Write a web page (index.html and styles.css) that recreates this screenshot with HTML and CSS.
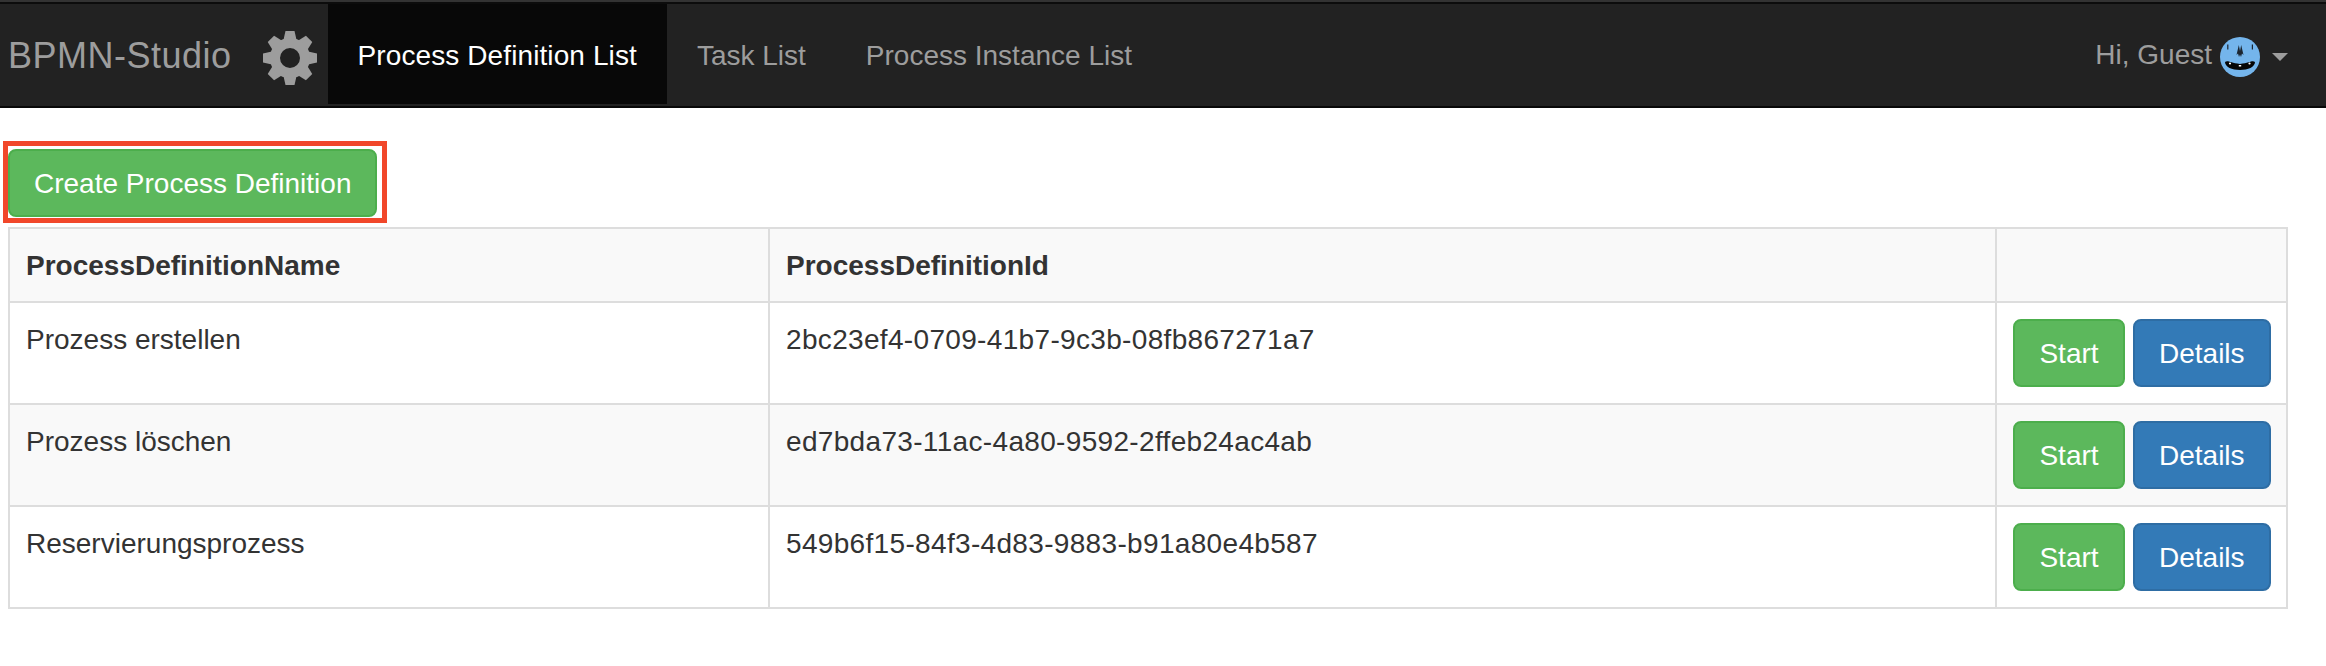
FILE: index.html
```html
<!DOCTYPE html>
<html lang="en">
<head>
    <meta charset="UTF-8">
    <meta name="viewport" content="width=device-width, initial-scale=1.0">
    <title>BPMN-Studio</title>
    <link rel="stylesheet" href="styles.css">
</head>
<body>
    <nav class="navbar">
        <a class="brand" href="#">BPMN-Studio</a>
        <svg class="gear" viewBox="-28 -28 56 56" aria-hidden="true">
            <g fill="#9d9d9d">
                <path d="M-4.500 -27 H4.500 L7 -16 H-7 Z"/>
                <path d="M-4.500 -27 H4.500 L7 -16 H-7 Z" transform="rotate(45)"/>
                <path d="M-4.500 -27 H4.500 L7 -16 H-7 Z" transform="rotate(90)"/>
                <path d="M-4.500 -27 H4.500 L7 -16 H-7 Z" transform="rotate(135)"/>
                <path d="M-4.500 -27 H4.500 L7 -16 H-7 Z" transform="rotate(180)"/>
                <path d="M-4.500 -27 H4.500 L7 -16 H-7 Z" transform="rotate(225)"/>
                <path d="M-4.500 -27 H4.500 L7 -16 H-7 Z" transform="rotate(270)"/>
                <path d="M-4.500 -27 H4.500 L7 -16 H-7 Z" transform="rotate(315)"/>
            </g>
            <circle r="15" fill="none" stroke="#9d9d9d" stroke-width="10"/>
        </svg>
        <ul class="nav">
            <li class="active"><a href="#">Process Definition List</a></li>
            <li><a href="#">Task List</a></li>
            <li><a href="#">Process Instance List</a></li>
        </ul>
        <a class="user" href="#">
            <span class="user-name">Hi, Guest</span>
            <svg class="avatar" viewBox="0 0 40 40" aria-hidden="true">
                <circle cx="20" cy="20" r="20" fill="#74b5ec"/>
                <path d="M7.200 7.500 h1.200 v5 h-1.200 Z M31.800 7.500 h1.200 v5 h-1.200 Z" fill="#1b2530"/>
                <path d="M18.800 8 L16.500 18 L18 16.500 L19 20 L20 17.500 L21 20 L22 16.500 L23.500 18 L21.200 8 L20 14 Z" fill="#1b2530"/>
                <path d="M5 25 C8 23 10 26 20 27 C30 26 32 23 35 25 C35 30 28 33 20 33 C12 33 5 30 5 25 Z" fill="#050505"/>
                <circle cx="10" cy="26.500" r="1.100" fill="#fff"/>
                <rect x="18.800" y="28" width="2.400" height="1.500" fill="#fff"/>
                <circle cx="29.500" cy="26.500" r="1.100" fill="#fff"/>
            </svg>
            <span class="caret"></span>
        </a>
    </nav>

    <main class="content">
        <div class="toolbar">
            <span class="marked">
                <a class="btn btn-success" href="#">Create Process Definition</a>
                <span class="marker"></span>
            </span>
        </div>
        <table class="table">
            <colgroup>
                <col class="col-name">
                <col class="col-id">
                <col class="col-actions">
            </colgroup>
            <thead>
                <tr>
                    <th>ProcessDefinitionName</th>
                    <th>ProcessDefinitionId</th>
                    <th></th>
                </tr>
            </thead>
            <tbody>
                <tr>
                    <td>Prozess erstellen</td>
                    <td class="uuid">2bc23ef4-0709-41b7-9c3b-08fb867271a7</td>
                    <td class="actions"><a class="btn btn-success" href="#">Start</a><a class="btn btn-primary" href="#">Details</a></td>
                </tr>
                <tr>
                    <td>Prozess löschen</td>
                    <td class="uuid">ed7bda73-11ac-4a80-9592-2ffeb24ac4ab</td>
                    <td class="actions"><a class="btn btn-success" href="#">Start</a><a class="btn btn-primary" href="#">Details</a></td>
                </tr>
                <tr>
                    <td>Reservierungsprozess</td>
                    <td class="uuid">549b6f15-84f3-4d83-9883-b91a80e4b587</td>
                    <td class="actions"><a class="btn btn-success" href="#">Start</a><a class="btn btn-primary" href="#">Details</a></td>
                </tr>
            </tbody>
        </table>
    </main>
</body>
</html>
```

FILE: styles.css
```css
* {
    box-sizing: border-box;
}
html, body {
    margin: 0;
}
body {
    font-family: "Liberation Sans", Arial, sans-serif;
    font-size: 28px;
    line-height: 40px;
    color: #333;
    background-color: #fff;
}
a {
    text-decoration: none;
}

.navbar {
    display: flex;
    align-items: center;
    height: 108px;
    padding: 2px 8px;
    background-color: #222;
    border-top: 2px solid #333;
    border-bottom: 2px solid #080808;
    box-shadow: inset 0 2px 0 #0c0c0c;
}
.brand {
    padding-top: 3px;
    font-size: 36px;
    letter-spacing: .5px;
    color: #9d9d9d;
}
.gear {
    width: 56px;
    height: 56px;
    margin-top: 8px;
    margin-left: 30px;
    margin-right: 10px;
}
.nav {
    display: flex;
    align-self: stretch;
    list-style: none;
    margin: 0;
    padding: 0;
}
.nav a {
    display: flex;
    align-items: center;
    height: 100%;
    padding: 3px 30px 0;
    color: #9d9d9d;
}
.nav .active a {
    color: #fff;
    background-color: #080808;
    letter-spacing: .1px;
}
.user {
    display: flex;
    align-items: center;
    margin-left: auto;
    padding-right: 30px;
    color: #9d9d9d;
}
.user-name {
    padding-top: 2px;
}
.avatar {
    width: 40px;
    height: 40px;
    margin-top: 6px;
    margin-left: 8px;
}
.caret {
    width: 0;
    height: 0;
    margin-top: 5px;
    margin-left: 12px;
    border-top: 8px solid #9d9d9d;
    border-left: 8px solid transparent;
    border-right: 8px solid transparent;
}

.content {
    padding: 41px 8px 0;
}
.toolbar {
    display: flex;
    margin-bottom: 10px;
}
.marked {
    position: relative;
    display: inline-flex;
}
.marker {
    position: absolute;
    top: -8px;
    bottom: -6px;
    left: -5px;
    right: -10px;
    border: 5px solid #f1472a;
}

.btn {
    display: inline-block;
    padding: 13px 24px 11px;
    border: 2px solid transparent;
    border-radius: 8px;
    color: #fff;
    text-align: center;
    white-space: nowrap;
}
.btn-success {
    background-color: #5cb85c;
    border-color: #4cae4c;
}
.btn-primary {
    background-color: #337ab7;
    border-color: #2e6da4;
    margin-left: 8px;
}

.table {
    width: 2280px;
    table-layout: fixed;
    border-collapse: separate;
    border-spacing: 0;
    border-right: 2px solid #ddd;
    border-bottom: 2px solid #ddd;
}
.col-name {
    width: 760px;
}
.col-id {
    width: 1227px;
}
.col-actions {
    width: 291px;
}
.table th, .table td {
    padding: 17px 16px 15px;
    border-top: 2px solid #ddd;
    border-left: 2px solid #ddd;
    text-align: left;
    vertical-align: top;
}
.table thead tr, .table tbody tr:nth-child(even) {
    background-color: #f9f9f9;
}
.uuid {
    letter-spacing: .33px;
}
.table .actions {
    padding: 16px;
    white-space: nowrap;
}
.actions .btn-success {
    min-width: 112px;
}
```
